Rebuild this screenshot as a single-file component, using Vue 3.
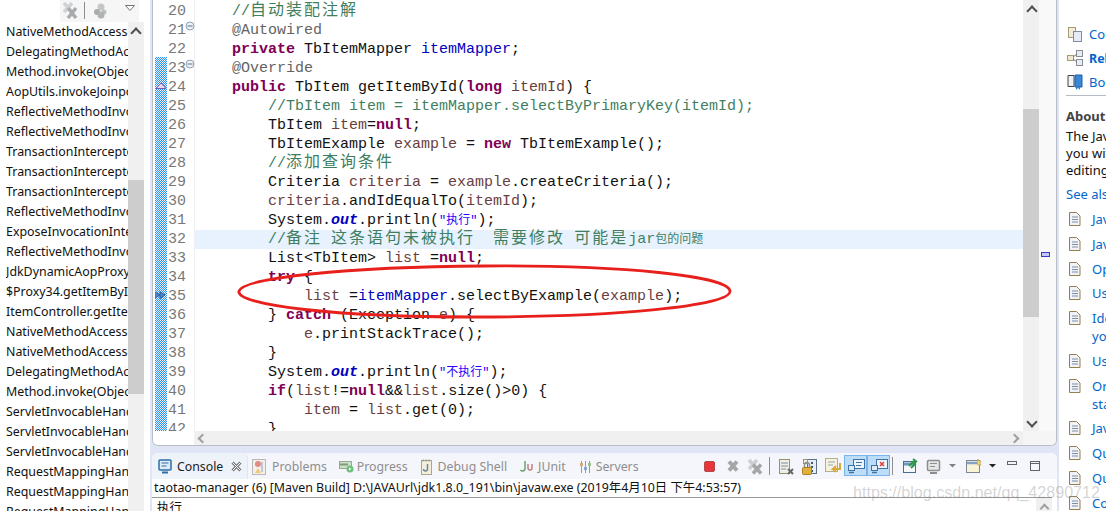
<script setup>
const stack = ['NativeMethodAccessorImpl','DelegatingMethodAccessorImpl','Method.invoke(Object, Object...)','AopUtils.invokeJoinpointUsingReflection','ReflectiveMethodInvocation','ReflectiveMethodInvocation','TransactionInterceptor$1','TransactionInterceptor','TransactionInterceptor','ReflectiveMethodInvocation','ExposeInvocationInterceptor','ReflectiveMethodInvocation','JdkDynamicAopProxy','$Proxy34.getItemById(long)','ItemController.getItemById','NativeMethodAccessorImpl','NativeMethodAccessorImpl','DelegatingMethodAccessorImpl','Method.invoke(Object, Object...)','ServletInvocableHandlerMethod','ServletInvocableHandlerMethod','ServletInvocableHandlerMethod','RequestMappingHandlerAdapter','RequestMappingHandlerAdapter','RequestMappingHandlerAdapter']
const p=(t)=>[t,'']
const k=(t)=>[t,'kw']
const c=(t)=>[t,'cm']
const z=(t)=>[t,'cm cj']
const a=(t)=>[t,'an']
const f=(t)=>[t,'fd']
const o=(t)=>[t,'st']
const s=(t)=>[t,'sr']
const v=(t)=>[t,'lv']
const code = [
 [p('    '),c('//'),z('自动装配注解')],
 [p('    '),a('@Autowired')],
 [p('    '),k('private'),p(' TbItemMapper '),f('itemMapper'),p(';')],
 [p('    '),a('@Override')],
 [p('    '),k('public'),p(' TbItem getItemById('),k('long'),p(' '),v('itemId'),p(') {')],
 [p('        '),c('//TbItem item = itemMapper.selectByPrimaryKey(itemId);')],
 [p('        TbItem '),v('item'),p('='),k('null'),p(';')],
 [p('        TbItemExample '),v('example'),p(' = '),k('new'),p(' TbItemExample();')],
 [p('        '),c('//'),z('添加查询条件')],
 [p('        Criteria '),v('criteria'),p(' = '),v('example'),p('.createCriteria();')],
 [p('        '),v('criteria'),p('.andIdEqualTo('),v('itemId'),p(');')],
 [p('        System.'),o('out'),p('.println('),s('"执行"'),p(');')],
 [p('        '),c('//'),z('备注'),c(' '),z('这条语句未被执行'),c('  '),z('需要修改'),c(' '),z('可能是'),c('jar'),['包的问题','cm sm']],
 [p('        List<TbItem> '),v('list'),p(' ='),k('null'),p(';')],
 [p('        '),k('try'),p(' {')],
 [p('            '),v('list'),p(' ='),f('itemMapper'),p('.selectByExample('),v('example'),p(');')],
 [p('        } '),k('catch'),p(' (Exception '),v('e'),p(') {')],
 [p('            '),v('e'),p('.printStackTrace();')],
 [p('        }')],
 [p('        System.'),o('out'),p('.println('),s('"不执行"'),p(');')],
 [p('        '),k('if'),p('('),v('list'),p('!='),k('null'),p('&&'),v('list'),p('.size()>0) {')],
 [p('            '),v('item'),p(' = '),v('list'),p('.get(0);')],
 [p('        }')],
]
const nums = code.map((_,i)=>20+i)
const links1=[
 ['Jav',0],['Jav',0],['Op',0],['Usi',0],['Ide','you'],['Usi',0],['Org','sta'],['Jav',0],['Qu',0],['Qu',0],['Co',0]
]
</script>

<template>
  <div class="app">
    <aside class="left">
      <div class="ltool">
        <svg width="79" height="22" viewBox="0 0 79 22">
          <path d="M4 3l8 9M12 3l-8 9" stroke="#d0d3d6" stroke-width="3.500"/>
          <path d="M8 8l8 10M16 8l-8 10" stroke="#a8aaac" stroke-width="3.500"/>
          <path d="M24.500 2v17" stroke="#8b8e90"/>
          <circle cx="41" cy="7" r="3.500" fill="#c4c6c6"/><circle cx="37" cy="12" r="3" fill="#a9abab"/><circle cx="44" cy="12" r="2.500" fill="#bdbfbf"/><circle cx="41" cy="15" r="3.500" fill="#b0b2b2"/>
          <path d="M65.500 5.500h9l-4.500 5z" fill="#fff" stroke="#777"/>
        </svg>
      </div>
      <div class="lbody">
        <ul class="stack">
          <li v-for="(t,i) in stack" :key="i">{{ t }}</li>
        </ul>
        <div class="lscroll">
          <span class="chev up"></span>
          <div class="lthumb"></div>
        </div>
      </div>
    </aside>

    <main class="center">
      <section class="editor">
        <div class="edbody">
          <div class="ruler">
            <div class="hatch"></div>
            <svg class="mk1" width="12" height="8" viewBox="0 0 12 8"><path d="M1 6.500L6 1l5 5.500z" fill="#e8d8f4" stroke="#7a5bb0"/></svg>
            <svg class="mk2" width="12" height="10" viewBox="0 0 12 10"><path d="M1 2l5 3-5 3M6 1.500l5 3.500-5 3.500z" fill="#4a86c8" stroke="#2f5f9f"/></svg>
          </div>
          <div class="nums">
            <div v-for="n in nums" :key="n" class="num">{{ n }}<svg v-if="n===21||n===23" class="fold" width="10" height="10" viewBox="0 0 10 10"><circle cx="5" cy="5" r="4" fill="#eef1f4" stroke="#8ea3b5"/><path d="M2.500 5h5" stroke="#5f7486"/></svg></div>
          </div>
          <div class="code">
            <div v-for="(ln,i) in code" :key="i" class="ln" :class="{cur:i===12}"><span v-for="(t,j) in ln" :key="j" :class="t[1]">{{ t[0] }}</span></div>
          </div>
          <div class="vscroll">
            <span class="chev up"></span>
            <span class="chev down"></span>
            <div class="vthumb"></div>
          </div>
          <div class="ovr"><i class="ovmark"></i></div>
        </div>
        <div class="hbar">
          <div class="hpad"></div>
          <div class="htrack"><span class="cl"></span><span class="cr"></span></div>
          <div class="hend"></div>
        </div>
      </section>

      <section class="console">
        <div class="ctabs">
          <div class="tab on">
            <svg width="14" height="15" viewBox="0 0 14 15"><rect x="1" y="1" width="12" height="10" rx="1" fill="#dfeaf7" stroke="#2c6ea8" stroke-width="1.500"/><path d="M3.500 4h7M3.500 7h5" stroke="#2c6ea8"/><path d="M4 13.500h6" stroke="#2c6ea8" stroke-width="2"/></svg>
            <span>Console</span>
            <svg class="xic" width="11" height="11" viewBox="0 0 11 11"><path d="M1.500 1.500l8 8M9.500 1.500l-8 8" stroke="#777" stroke-width="3"/><path d="M1.500 1.500l8 8M9.500 1.500l-8 8" stroke="#fff" stroke-width="1"/></svg>
          </div>
          <div class="tab off i1">
            <svg width="14" height="16" viewBox="0 0 14 16"><rect x=".5" y=".5" width="13" height="15" fill="#f5efe6" stroke="#b8b8b8"/><circle cx="6" cy="5" r="3" fill="#e08a8a"/><path d="M6 9l3 5H3z" fill="#ecc878"/><path d="M10 3v10" stroke="#b9c8da" stroke-width="2"/></svg>
            <span>Problems</span>
          </div>
          <div class="tab off i2">
            <svg width="15" height="13" viewBox="0 0 15 13"><rect x=".5" y="1.500" width="12" height="7" fill="#cfe0c8" stroke="#9aa794"/><path d="M1 4.500h8" stroke="#7f9a78" stroke-width="2"/><circle cx="11" cy="9" r="3.500" fill="#6fbf7d"/><path d="M10 7.500l2.500 1.500-2.500 1.500z" fill="#fff"/></svg>
            <span>Progress</span>
          </div>
          <div class="tab off i3">
            <svg width="11" height="16" viewBox="0 0 11 16"><rect x=".5" y="1.500" width="10" height="14" fill="#f4efdb" stroke="#a9a78e"/><path d="M2 .5v2M5 .5v2M8 .5v2" stroke="#888"/><path d="M6.500 5v5a2 2 0 0 1-4 0" stroke="#6a87a0" fill="none" stroke-width="1.500"/></svg>
            <span>Debug Shell</span>
          </div>
          <div class="tab off i4">
            <svg width="14" height="13" viewBox="0 0 14 13"><path d="M5 1v8a2.500 2.500 0 0 1-4.500 1" stroke="#6ea26e" stroke-width="1.500" fill="none"/><path d="M8 4v4a2 2 0 0 0 4 0V4" stroke="#c08080" stroke-width="1.500" fill="none"/></svg>
            <span>JUnit</span>
          </div>
          <div class="tab off i5">
            <svg width="13" height="14" viewBox="0 0 13 14"><path d="M2.500 1v12M6.500 1v12M10.500 1v12" stroke="#9a9a9a"/><rect x="1" y="3" width="3" height="3" fill="#d9a77a"/><rect x="5" y="7" width="3" height="3" fill="#88a8c8"/><rect x="9" y="3" width="3" height="3" fill="#9ac090"/></svg>
            <span>Servers</span>
          </div>
          <svg class="ctools" width="338" height="26" viewBox="703 453 338 26">
            <rect x="704.500" y="461.500" width="10" height="10" rx="1.500" fill="#e8353a" stroke="#b6474c"/>
            <path d="M729 461.500l8 9M737 461.500l-8 9" stroke="#a6a6a8" stroke-width="4"/>
            <path d="M749 460l8 9M757 460l-8 9" stroke="#cbcfd2" stroke-width="3.500"/>
            <path d="M753 464.500l8 9M761 464.500l-8 9" stroke="#a6a6a8" stroke-width="3.500"/>
            <path d="M769.500 457v18" stroke="#8d8f92"/>
            <rect x="779.500" y="459.500" width="10" height="14" fill="#eef0e8" stroke="#9a8f68"/><path d="M781 463h7M781 466h7M781 469h5" stroke="#7d8ea3"/>
            <path d="M788 469l5 5M793 469l-5 5" stroke="#666" stroke-width="2"/>
            <rect x="807.500" y="459.500" width="9" height="14" fill="#e6edf6" stroke="#5d7287"/><path d="M812 462v2M812 466v2M812 470v2" stroke="#456" stroke-width="2"/>
            <rect x="803.500" y="459.500" width="4" height="4" fill="#f3f1e4" stroke="#9a9470"/>
            <rect x="802.500" y="467.500" width="9" height="7" rx="1" fill="#e0b13c" stroke="#a97c1d"/><path d="M804.500 467v-2a2.500 2.500 0 0 1 5 0v2" fill="none" stroke="#8e8e8e" stroke-width="1.500"/>
            <rect x="825.500" y="458.500" width="12" height="13" fill="#f7f2dc" stroke="#b5ae8e"/><path d="M828 462h7M828 465h5" stroke="#97a6b7"/><path d="M840 463v6h-7l3-3m-3 3l3 3" stroke="#d8a93e" stroke-width="2" fill="none"/>
            <rect x="844.500" y="455.500" width="22" height="20" fill="#bcdcf8" stroke="#79b4ea"/>
            <rect x="867.500" y="455.500" width="22" height="20" fill="#bcdcf8" stroke="#79b4ea"/>
            <rect x="853.500" y="459.500" width="11" height="9" fill="#eef4fb" stroke="#3f73a5"/><path d="M856 462.500h6M856 465.500h5" stroke="#3f73a5"/>
            <rect x="848.500" y="465.500" width="6" height="5" fill="#dfeaf7" stroke="#3f73a5"/><path d="M849 472.500h5" stroke="#3f73a5" stroke-width="1.500"/>
            <rect x="876.500" y="459.500" width="11" height="9" fill="#eef4fb" stroke="#3f73a5"/><path d="M880 462l4 4M884 462l-4 4" stroke="#e23a3a" stroke-width="1.500"/>
            <rect x="871.500" y="465.500" width="6" height="5" fill="#dfeaf7" stroke="#3f73a5"/><path d="M872 472.500h5" stroke="#3f73a5" stroke-width="1.500"/>
            <path d="M892.500 457v18" stroke="#8d8f92"/>
            <rect x="903.500" y="461.500" width="12" height="11" fill="#f7f8fb" stroke="#4b6d8c"/><path d="M904 464h11" stroke="#6f97bd" stroke-width="3"/>
            <path d="M909 466l4-4 2 2-4 4M913 459l4 3" stroke="#2c9a44" stroke-width="2" fill="none"/>
            <rect x="927.500" y="460.500" width="12" height="10" rx="1" fill="#e6e6e6" stroke="#8b8d8f" stroke-width="1.500"/><path d="M930 463.500h7M930 466.500h5" stroke="#8b8d8f"/><path d="M930 473h7" stroke="#8b8d8f" stroke-width="2"/>
            <path d="M949 464h7l-3.500 3.500z" fill="#808080"/>
            <rect x="966.500" y="460.500" width="13" height="12" fill="#faf4d6" stroke="#7c8794"/><path d="M967 463h12" stroke="#7ea4c6" stroke-width="2.500"/>
            <path d="M978 459l1 2 2 0-1 2 1 2-3 0-1-2z" fill="#f3d977" stroke="#b59a3a" stroke-width=".6"/>
            <path d="M989 464h7l-3.500 3.500z" fill="#222"/>
            <rect x="1007.500" y="461.500" width="9" height="3" fill="#f3f5fb" stroke="#606468"/>
            <rect x="1030.500" y="461.500" width="9" height="9" fill="#f7f8fd" stroke="#606468"/><path d="M1030 463.500h10" stroke="#606468"/>
          </svg>
        </div>
        <div class="cpath">taotao-manager (6) [Maven Build] D:\JAVAUrl\jdk1.8.0_191\bin\javaw.exe (2019年4月10日 下午4:53:57)</div>
        <div class="cout"><span>执行</span><div class="coutbar"><span class="chev up"></span></div></div>
      </section>
      <svg class="oval" width="500" height="60" viewBox="0 0 500 60"><path d="M5 29C10 16 110 5 250 4c140-1 244 10 246 25 2 15-116 26-256 26C100 55 1 43 5 29z" fill="none" stroke="#e8201c" stroke-width="2.800"/></svg>
      <div class="wm">https://blog.csdn.net/qq_42890712</div>
    </main>

    <aside class="right">
      <div class="rl top"><svg width="16" height="16" viewBox="0 0 16 16"><rect x="1.500" y="1.500" width="7" height="10" fill="#f2ecd8" stroke="#a59b75"/><rect x="6.500" y="5.500" width="8" height="10" fill="#e6ecf6" stroke="#7d8ea3"/></svg><a>Contents</a></div>
      <div class="rl"><svg width="16" height="16" viewBox="0 0 16 16"><rect x=".5" y="5.500" width="6" height="5" fill="#efe7cf" stroke="#a59b75"/><rect x="9.500" y=".5" width="6" height="6" fill="#e6ecf6" stroke="#8a8f95"/><rect x="9.500" y="9.500" width="6" height="6" fill="#e6ecf6" stroke="#8a8f95"/><path d="M6 7l4-3M6 9l4 3" stroke="#777"/></svg><a class="b">Related Topics</a></div>
      <div class="rl"><svg width="16" height="17" viewBox="0 0 16 17"><path d="M1 1.500h6v11H1z" fill="#eef1f5" stroke="#444"/><path d="M8 1h7v12H8z" fill="#3a86d8" stroke="#1f5fa8"/><path d="M9 13v3l2-2 2 2v-3" fill="#3a86d8"/></svg><a>Bookmarks</a></div>
      <hr />
      <h4>About the Java editor</h4>
      <p>The Java editor provides<br/>you with Java specific text<br/>editing support</p>
      <a class="see">See also:</a>
      <ul class="docs">
        <li v-for="(l,i) in links1" :key="i">
          <svg width="12" height="14" viewBox="0 0 12 14"><path d="M.5.500h7l3.500 3.500v9.500H.5z" fill="#f1f3f9" stroke="#947f4d"/><path d="M3 5h6M3 7.500h6M3 10h6" stroke="#7d8ea3"/></svg>
          <div class="dt"><a>{{ l[0] }}</a><a v-if="l[1]">{{ l[1] }}</a></div>
        </li>
      </ul>
    </aside>
  </div>
</template>

<style scoped>
.app{position:relative;display:flex;width:1106px;height:511px;overflow:hidden;background:#fff;font-family:"Noto Sans","Noto Sans CJK SC",sans-serif;color:#111;}
.left{width:151px;flex:none;display:flex;flex-direction:column;background:#fff;border-right:1px solid #dfe5f5;box-sizing:border-box;height:511px;}
.ltool{height:22px;margin-left:60px;width:79px;background:#f6f6f6;flex:none;}
.lbody{display:flex;flex:1;min-height:0;width:144px;}
.stack{list-style:none;margin:0;padding:0 0 0 6px;width:122px;overflow:hidden;flex:none;}
.stack li{height:20px;line-height:19px;font-size:12.400px;white-space:nowrap;overflow:hidden;}
.lscroll{position:relative;width:16px;flex:none;background:#f0f0f0;}
.lthumb{margin-top:158px;height:214px;background:#cdcdcd;}
.chev{position:absolute;width:6px;height:6px;border:solid #505050;border-width:2px 0 0 2px;}
.lscroll .chev{left:4px;top:7px;transform:rotate(45deg);}
.center{position:relative;flex:1;min-width:0;background:#dfe5f5;padding-left:1px;display:flex;flex-direction:column;gap:7px;}
.editor{height:446px;flex:none;background:#fff;border:solid #b8bdc6;border-width:0 1px 1px 1px;border-radius:0 0 6px 6px;box-sizing:border-box;overflow:hidden;display:flex;flex-direction:column;width:905px;}
.edbody{display:flex;height:431px;flex:none;overflow:hidden;}
.ruler{position:relative;width:15px;flex:none;background:#fff;}
.hatch{margin:57px 0 0 2px;width:12px;height:374px;background:conic-gradient(#2f90ee 25%,#e8f3ff 0 50%,#2f90ee 0 75%,#e8f3ff 0) 0 0/2px 2px;}
.mk1{position:absolute;left:2px;top:82px;}
.mk2{position:absolute;left:1px;top:290px;}
.nums{width:27px;flex:none;font:15px/19px "Liberation Mono",monospace;color:#787878;background:#fff;border-right:1px solid #f0f0f0;box-sizing:border-box;padding-top:2px;}
.num{height:19px;position:relative;}
.fold{position:absolute;left:17px;top:0;}
.code{flex:1;min-width:0;font:15px/19px "Liberation Mono","Noto Sans CJK SC",monospace;color:#111;padding:2px 0 0 1px;white-space:pre;}
.ln{height:19px;}
.cur{background:#e8f2fe;margin-left:-1px;padding-left:1px;}
.kw{color:#7f0055;font-weight:700;}
.cm{color:#3f7f5f;}
.cj{font-size:16px;line-height:0;letter-spacing:2px;font-family:"Noto Sans CJK SC",sans-serif;}
.sm{font-size:12px;line-height:0;font-family:"Noto Sans CJK SC",sans-serif;}
.an{color:#646464;}
.fd{color:#0000c0;}
.st{color:#0000c0;font-weight:700;font-style:italic;}
.sr{color:#2a00ff;font-size:12px;line-height:0;}
.lv{color:#6a3e3e;}
.vscroll{position:relative;width:16px;flex:none;background:#f0f0f0;}
.vthumb{margin-top:109px;height:208px;background:#cdcdcd;}
.vscroll .up{left:5px;top:7px;transform:rotate(45deg);}
.vscroll .down{left:5px;top:418px;transform:rotate(225deg);}
.ovr{width:17px;flex:none;background:#f9f9f9;position:relative;}
.ovmark{position:absolute;left:2px;top:252px;width:7px;height:3px;background:#c4c8f5;border:1px solid #3a3ac8;}
.hbar{display:flex;flex:1;}
.hpad{width:41px;background:#fff;}
.htrack{flex:1;position:relative;background:#f0f0f0;}
.hend{width:33px;background:#f5f5f5;}
.cl,.cr{position:absolute;top:4px;width:5px;height:5px;border:solid #a0a0a0;border-width:2px 0 0 2px;}
.cl{left:5px;transform:rotate(-45deg);}
.cr{right:5px;transform:rotate(135deg);}
.console{flex:1;width:905px;background:#fff;border-radius:6px 6px 0 0;display:flex;flex-direction:column;overflow:hidden;box-sizing:border-box;}
.ctabs{height:26px;flex:none;display:flex;align-items:center;background:#f5f6fb;font-size:12.300px;}
.tab{display:flex;align-items:center;height:26px;padding-top:1px;box-sizing:border-box;}
.tab.on{width:96px;gap:5px;padding-left:6px;background:#eef2f9;border-right:1px solid #dfe5f5;border-radius:6px 6px 0 0;color:#222;}
.xic{margin-left:3px;}
.off{color:#8e8e8e;}
.i1{margin-left:4px;gap:6px;}
.i2{margin-left:12px;gap:3px;}
.i3{margin-left:13px;gap:6px;}
.i4{margin-left:13px;gap:4px;}
.i5{margin-left:13px;gap:4px;}
.ctools{margin-left:auto;margin-right:16px;flex:none;}
.cpath{height:19px;flex:none;line-height:18px;font-size:12.400px;color:#111;border-bottom:1px solid #999;padding-left:2px;white-space:nowrap;box-sizing:border-box;width:900px;}
.cout{position:relative;flex:1;padding-left:5px;font-size:12.400px;line-height:20px;}
.coutbar{position:absolute;left:884px;top:0;width:16px;height:14px;background:#f0f0f0;}
.coutbar .chev{left:5px;top:7px;width:5px;height:5px;border-color:#a0a0a0;transform:rotate(45deg);}
.oval{position:absolute;left:83px;top:262px;pointer-events:none;}
.wm{position:absolute;z-index:5;left:702px;top:482px;font:16.100px/20px "Liberation Sans",sans-serif;color:rgba(120,120,120,.32);white-space:nowrap;}
.right{width:47px;flex:none;background:#fff;overflow:hidden;padding-left:7px;box-sizing:border-box;white-space:nowrap;font-size:13px;}
.rl{display:flex;align-items:center;height:24px;gap:6px;}
.top{margin-top:22px;}
.rl svg{flex:none;margin-left:1px;}
a{color:#0066cc;}
.b{font-weight:700;font-size:12.400px;}
hr{border:0;border-top:1px solid #b6bcc6;margin:1px 0 0;width:60px;}
h4{margin:10px 0 0;font-size:13px;line-height:20px;font-weight:700;color:#444;}
p{margin:2px 0 0;line-height:17px;font-size:13px;color:#111;}
.see{display:block;margin-top:6px;line-height:19px;}
.docs{list-style:none;margin:6px 0 0;padding:0;}
.docs li{display:flex;gap:11px;padding-bottom:6.750px;line-height:18px;align-items:flex-start;}
.docs svg{flex:none;margin:2px 0 0 3px;}
.dt{display:flex;flex-direction:column;}
</style>
